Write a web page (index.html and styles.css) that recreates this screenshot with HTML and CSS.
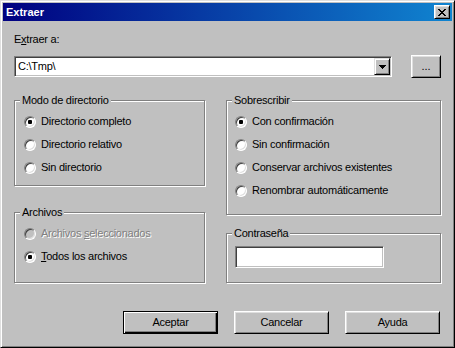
FILE: index.html
```html
<!DOCTYPE html>
<html lang="es">
<head>
  <meta charset="UTF-8" />
  <title>Extraer</title>
  <link rel="stylesheet" href="styles.css">
</head>
<body>
  <div class="window">
    <!-- title bar -->
    <div class="titlebar">
      <span class="title">Extraer</span>
      <button class="close" aria-label="Cerrar">
        <svg width="8" height="7" viewBox="0 0 8 7" shape-rendering="crispEdges">
          <path d="M0 0h2v1h-2zM6 0h2v1h-2zM1 1h2v1h-2zM5 1h2v1h-2zM2 2h4v1h-4zM3 3h2v1h-2zM2 4h4v1h-4zM1 5h2v1h-2zM5 5h2v1h-2zM0 6h2v1h-2zM6 6h2v1h-2z" fill="#000"/>
        </svg>
      </button>
    </div>

    <div class="content">
      <!-- 1) destination -->
      <div class="label">E<u>x</u>traer a:</div>
      <div class="path-row">
        <div class="combo">
          <span class="combo-text">C:\Tmp\</span>
          <span class="combo-btn">
            <svg width="7" height="4" viewBox="0 0 7 4" shape-rendering="crispEdges">
              <path d="M0 0h7v1h-7zM1 1h5v1h-5zM2 2h3v1h-3zM3 3h1v1h-1z" fill="#000"/>
            </svg>
          </span>
        </div>
        <button class="btn browse">...</button>
      </div>

      <!-- 2) options -->
      <div class="columns">
        <div class="col col-left">
          <div class="group group-mode">
            <span class="group-title">Modo de directorio</span>
            <div class="option"><span class="radio checked"></span><span>Directorio completo</span></div>
            <div class="option"><span class="radio"></span><span>Directorio relativo</span></div>
            <div class="option"><span class="radio"></span><span>Sin directorio</span></div>
          </div>
          <div class="group group-files">
            <span class="group-title">Archivos</span>
            <div class="option disabled"><span class="radio"></span><span>Archivos <u>s</u>eleccionados</span></div>
            <div class="option"><span class="radio checked"></span><span><u>T</u>odos los archivos</span></div>
          </div>
        </div>
        <div class="col col-right">
          <div class="group group-overwrite">
            <span class="group-title">Sobrescribir</span>
            <div class="option"><span class="radio checked"></span><span>Con confirmación</span></div>
            <div class="option"><span class="radio"></span><span>Sin confirmación</span></div>
            <div class="option"><span class="radio"></span><span>Conservar archivos existentes</span></div>
            <div class="option"><span class="radio"></span><span>Renombrar automáticamente</span></div>
          </div>
          <div class="group group-pass">
            <span class="group-title">Contraseña</span>
            <div class="field"></div>
          </div>
        </div>
      </div>

      <!-- 3) actions -->
      <div class="actions">
        <button class="btn default">Aceptar</button>
        <button class="btn">Cancelar</button>
        <button class="btn">Ayuda</button>
      </div>
    </div>
  </div>
</body>
</html>
```

FILE: styles.css
```css
body {
  margin: 0;
  background: #c0c0c0;
  font-family: "Liberation Sans", Arial, sans-serif;
  font-size: 11px;
  line-height: 13px;
  letter-spacing: -0.25px;
  color: #000;
}
button {
  font: inherit;
  letter-spacing: inherit;
  color: #000;
  padding: 0;
  margin: 0;
}
.window {
  width: 455px;
  height: 348px;
  box-sizing: border-box;
  background: #c0c0c0;
  border: 1px solid;
  border-color: #dfdfdf #000 #000 #dfdfdf;
  box-shadow: inset 1px 1px #fff, inset -1px -1px #808080;
  padding: 2px;
}
.titlebar {
  height: 18px;
  display: flex;
  align-items: center;
  padding: 0 2px 0 3px;
  background: linear-gradient(to right, #000080, #1084d0);
  color: #fff;
}
.title {
  font-weight: bold;
  letter-spacing: 0;
}
.close {
  margin-left: auto;
  width: 16px;
  height: 14px;
  box-sizing: border-box;
  display: flex;
  align-items: center;
  justify-content: center;
  background: #c0c0c0;
  border: 1px solid;
  border-color: #fff #000 #000 #fff;
  box-shadow: inset 1px 1px #dfdfdf, inset -1px -1px #808080;
}
.close svg {
  display: block;
  margin-left: -1px;
}
.content {
  padding: 12px 11px 0 11px;
}
.label {
  height: 13px;
}
u {
  text-underline-offset: 1px;
}
.path-row {
  margin-top: 9px;
  height: 23px;
  display: flex;
  align-items: center;
  justify-content: space-between;
}
.combo, .field {
  box-sizing: border-box;
  background: #fff;
  border: 1px solid;
  border-color: #808080 #fff #fff #808080;
  box-shadow: inset 1px 1px #404040, inset -1px -1px #c0c0c0;
}
.combo {
  width: 378px;
  height: 21px;
  padding: 1px;
  display: flex;
  align-items: center;
}
.combo-text {
  padding-left: 2px;
}
.combo-btn {
  margin-left: auto;
  width: 16px;
  height: 17px;
  box-sizing: border-box;
  display: flex;
  align-items: center;
  justify-content: center;
  background: #c0c0c0;
  border: 1px solid;
  border-color: #dfdfdf #000 #000 #dfdfdf;
  box-shadow: inset 1px 1px #fff, inset -1px -1px #808080;
}
.btn {
  width: 95px;
  height: 23px;
  box-sizing: border-box;
  background: #c0c0c0;
  border: 1px solid;
  border-color: #fff #000 #000 #fff;
  box-shadow: inset 1px 1px #dfdfdf, inset -1px -1px #808080;
}
.btn.default {
  border-color: #000;
  box-shadow: inset 1px 1px #fff, inset -1px -1px #000, inset -2px -2px #808080;
}
.browse {
  width: 30px;
  height: 23px;
  letter-spacing: 0;
}
.columns {
  margin-top: 22px;
  display: flex;
  gap: 21px;
}
.col {
  display: flex;
  flex-direction: column;
}
.col-left {
  width: 191px;
  gap: 26px;
}
.col-right {
  width: 215px;
  gap: 18px;
}
.group {
  position: relative;
  box-sizing: border-box;
  border: 1px solid #808080;
  box-shadow: inset 1px 1px #fff, 1px 1px #fff;
  padding: 9px 0 0 9px;
}
.group-title {
  position: absolute;
  top: -7px;
  left: 5px;
  padding: 0 2px 0 2px;
  background: #c0c0c0;
}
.group-mode {
  height: 86px;
}
.group-files {
  height: 71px;
}
.group-overwrite {
  height: 115px;
  padding-left: 8px;
}
.group-pass {
  height: 50px;
  padding: 12px 0 0 8px;
}
.field {
  width: 149px;
  height: 22px;
}
.option {
  height: 23px;
  display: flex;
  align-items: center;
}
.radio {
  position: relative;
  flex: none;
  width: 12px;
  height: 12px;
  box-sizing: border-box;
  margin-right: 5px;
  border-radius: 50%;
  background: #fff;
  border: 1px solid;
  border-color: #808080 #fff #fff #808080;
  box-shadow: inset 1px 1px #404040, inset -1px -1px #dfdfdf;
}
.radio.checked::after {
  content: '';
  position: absolute;
  left: 3px;
  top: 3px;
  width: 4px;
  height: 4px;
  border-radius: 1px;
  background: #000;
}
.option.disabled {
  color: #808080;
  text-shadow: 1px 1px 0 #fff;
}
.option.disabled .radio {
  background: #c0c0c0;
}
.actions {
  margin-top: 28px;
  margin-right: 1px;
  display: flex;
  justify-content: flex-end;
  gap: 16px;
}
```
